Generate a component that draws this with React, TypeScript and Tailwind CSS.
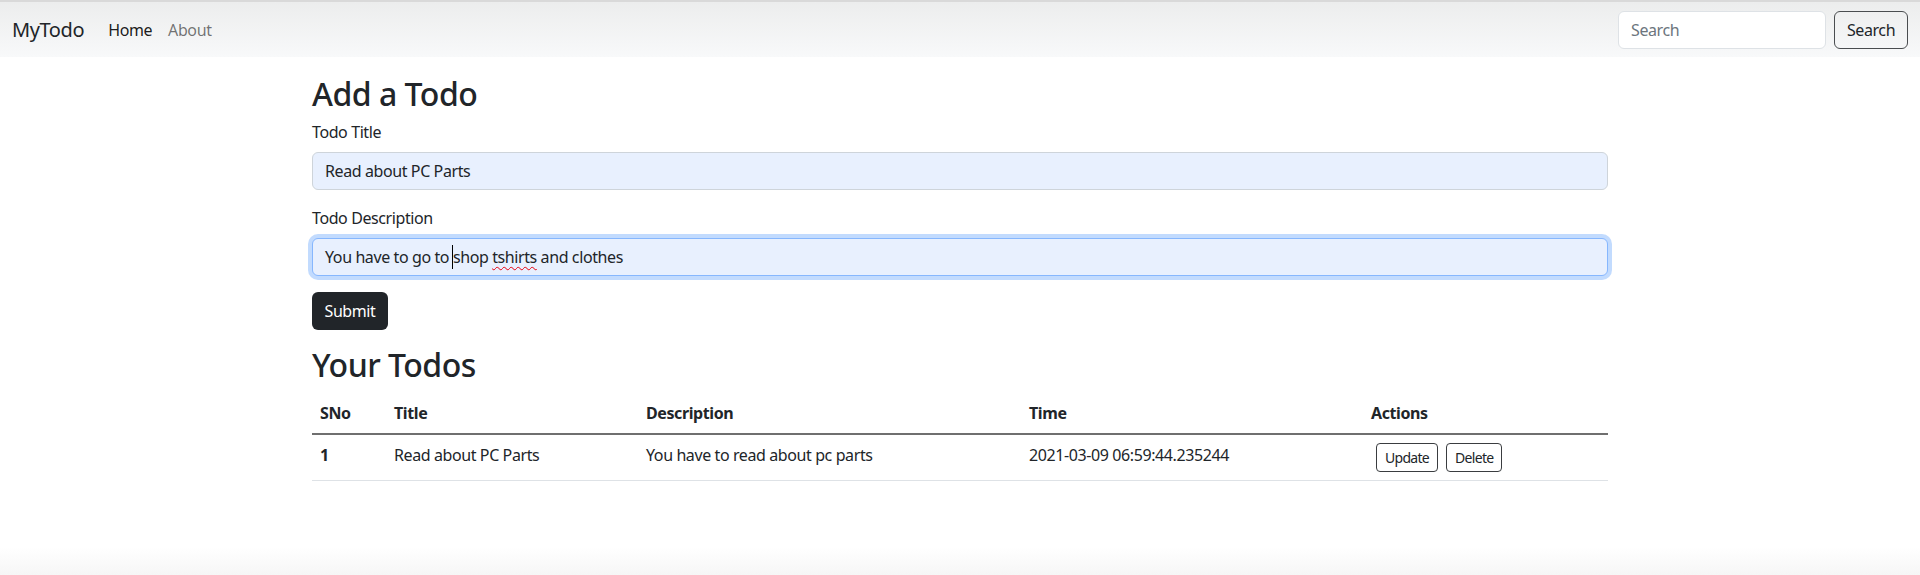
import React from 'react';

const todos = [
  {
    sno: 1,
    title: 'Read about PC Parts',
    desc: 'You have to read about pc parts',
    time: '2021-03-09 06:59:44.235244',
  },
];

export default function App() {
  return (
    <div
      className="min-h-[575px] flex flex-col bg-white text-[#212529] text-[16px] leading-[24px] tracking-[-0.4px]"
      style={{ fontFamily: '"Segoe UI", "Noto Sans", "Open Sans", sans-serif' }}
    >
      <Navbar />
      <main className="w-[1296px] mx-auto pt-[18px]">
        <h2 className="text-[32px] leading-[1.2] font-medium tracking-[-0.5px] mb-[7px]">Add a Todo</h2>
        <form onSubmit={(e) => e.preventDefault()}>
          <div className="mb-4">
            <label className="block mb-2">Todo Title</label>
            <div className="h-[38px] px-3 flex items-center rounded-md border border-[#ced4da] bg-[#e8f0fe]">
              Read about PC Parts
            </div>
          </div>
          <div className="mb-4">
            <label className="block mb-2">Todo Description</label>
            <div className="h-[38px] px-3 flex items-center rounded-md border border-[#86b7fe] bg-[#e8f0fe] shadow-[0_0_0_4px_rgba(13,110,253,0.25)]">
              <span className="whitespace-pre">You have to go to </span>
              <span className="border-l border-black -ml-px">shop</span>
              <span className="whitespace-pre"> </span>
              <span className="underline decoration-wavy decoration-red-600 decoration-1 underline-offset-[3px]">
                tshirts
              </span>
              <span className="whitespace-pre"> and clothes</span>
            </div>
          </div>
          <button
            type="submit"
            className="h-[38px] w-[76px] rounded-md bg-[#212529] text-white"
          >
            Submit
          </button>
        </form>

        <h2 className="text-[32px] leading-[1.2] font-medium tracking-[-0.5px] mt-[16px] mb-2">Your Todos</h2>
        <table className="w-full text-left border-collapse">
          <thead>
            <tr className="border-b-2 border-[#6f6f6f]">
              <th className="w-[74px] p-2 font-bold">SNo</th>
              <th className="w-[252px] p-2 font-bold">Title</th>
              <th className="w-[383px] p-2 font-bold">Description</th>
              <th className="w-[342px] p-2 font-bold">Time</th>
              <th className="p-2 font-bold">Actions</th>
            </tr>
          </thead>
          <tbody>
            {todos.map((t) => (
              <tr key={t.sno} className="border-b border-[#dee2e6] align-top">
                <th className="p-2 font-bold">{t.sno}</th>
                <td className="p-2">{t.title}</td>
                <td className="p-2">{t.desc}</td>
                <td className="p-2">{t.time}</td>
                <td className="p-2">
                  <div className="flex gap-2 ml-[5px]">
                    <SmallButton>Update</SmallButton>
                    <SmallButton>Delete</SmallButton>
                  </div>
                </td>
              </tr>
            ))}
          </tbody>
        </table>
      </main>
      <div className="mt-auto h-[28px] bg-gradient-to-b from-white to-[#f6f6f6]" />
    </div>
  );
}

function Navbar() {
  return (
    <nav className="h-[57px] border-t-2 border-[#d9d9d9] bg-gradient-to-b from-[#eceded] to-[#f8f9fa] px-3 flex items-center">
      <span className="text-[20px] leading-[30px] mr-[24px]">MyTodo</span>
      <a href="#" className="mr-4 text-black/90">Home</a>
      <a href="#" className="text-black/55">About</a>
      <div className="ml-auto flex items-center gap-2">
        <div className="w-[208px] h-[38px] px-3 flex items-center rounded-md border border-[#dee2e6] bg-white text-[#6c757d]">
          Search
        </div>
        <button className="w-[74px] h-[38px] rounded-md border border-[#4a4d50] bg-transparent text-[#212529]">
          Search
        </button>
      </div>
    </nav>
  );
}

function SmallButton({ children }: { children: React.ReactNode }) {
  return (
    <button className="h-[29px] px-2 rounded border border-[#3a3d40] text-[14px] leading-[21px] tracking-[-0.7px] text-[#212529]">
      {children}
    </button>
  );
}
